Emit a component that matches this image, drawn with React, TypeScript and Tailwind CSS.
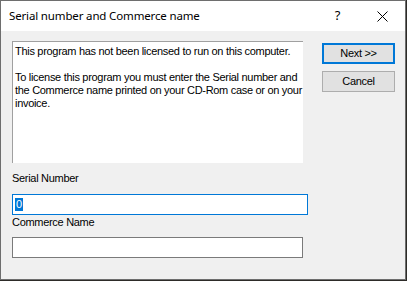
import React from 'react';

const sans = { fontFamily: '"Liberation Sans", Arial, sans-serif' };

function TitleBar() {
  return (
    <div className="h-[30px] bg-white flex items-center shrink-0">
      <span className="pl-[8px] text-[11.5px] tracking-[-0.15px] text-black font-['Noto_Sans',sans-serif] leading-none flex-1">
        Serial number and Commerce name
      </span>
      <span className="w-[46px] text-center text-[13px] text-black font-['Noto_Sans',sans-serif] pl-[3px]">?</span>
      <span className="w-[46px] flex justify-center">
        <svg width="11" height="11" viewBox="0 0 11 11">
          <path d="M0.5 0.5 L10.5 10.5 M10.5 0.5 L0.5 10.5" stroke="#000" strokeWidth="1" />
        </svg>
      </span>
    </div>
  );
}

export default function App() {
  return (
    <div className="w-[407px] h-[281px] bg-[#2d2b28]">
      <div className="w-[406px] h-[280px] border border-[#6e6e6e] bg-[#f0f0f0] flex flex-col text-[11px] text-black font-['Liberation_Sans',Arial,sans-serif]">
        <TitleBar />
        <div className="flex pl-[11px] pt-[10px]">
          <div className="w-[297px] flex flex-col">
            <div className="w-[291px] h-[122px] border-l border-t border-[#a0a0a0] bg-white overflow-hidden pl-[2px] pt-[3px] leading-[13px] whitespace-nowrap tracking-[-0.3px]">
              <div>This program has not been licensed to run on this computer.</div>
              <div className="h-[13px]" />
              <div>To license this program you must enter the Serial number and</div>
              <div>the Commerce name printed on your CD-Rom case or on your</div>
              <div>invoice.</div>
            </div>
            <div className="mt-[9px] leading-[13px] tracking-[-0.3px]">Serial Number</div>
            <div className="mt-[9px] w-[296px] h-[21px] border border-[#0078d7] bg-white flex items-center pl-[2px]">
              <span className="bg-[#0078d7] text-white leading-[13px] px-[1px]">0</span>
            </div>
            <div className="mt-[1px] leading-[13px] tracking-[-0.3px]">Commerce Name</div>
            <div className="mt-[8px] w-[291px] h-[21px] border border-[#7a7a7a] bg-white" />
          </div>
          <div className="ml-[13px] pt-[2px] flex flex-col gap-[7px]">
            <button className="w-[73px] h-[21px] border-2 border-[#0078d7] bg-[#e1e1e1] text-[11px] leading-none tracking-[-0.3px]" style={sans}>
              Next &gt;&gt;
            </button>
            <button className="w-[73px] h-[21px] border border-[#adadad] bg-[#e1e1e1] text-[11px] leading-none tracking-[-0.3px]" style={sans}>
              Cancel
            </button>
          </div>
        </div>
      </div>
    </div>
  );
}
